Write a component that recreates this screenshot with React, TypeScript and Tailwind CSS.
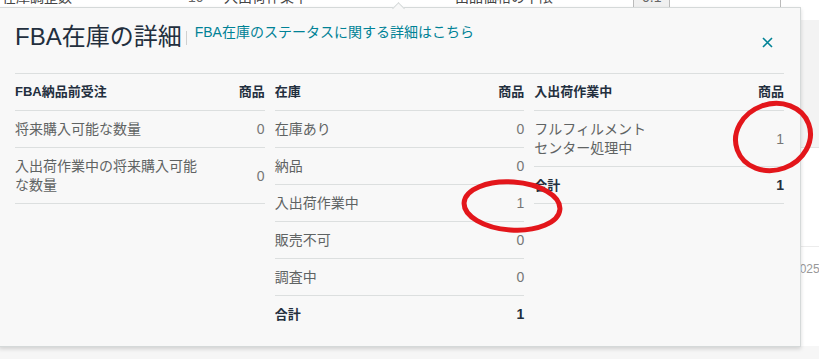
import React from 'react'

// FBA在庫の詳細 — ポップオーバー（背景の表の上に重なる）と赤丸の注記

type Row = { label: string[]; value: string; total?: boolean }
type Col = { title: string; rows: Row[]; noLastLine?: boolean }

const FONT = { fontFamily: '"Liberation Sans", "Noto Sans CJK JP", sans-serif' }

const columns: Col[] = [
  {
    title: 'FBA納品前受注',
    rows: [
      { label: ['将来購入可能な数量'], value: '0' },
      { label: ['入出荷作業中の将来購入可能', 'な数量'], value: '0' },
    ],
  },
  {
    title: '在庫',
    noLastLine: true,
    rows: [
      { label: ['在庫あり'], value: '0' },
      { label: ['納品'], value: '0' },
      { label: ['入出荷作業中'], value: '1' },
      { label: ['販売不可'], value: '0' },
      { label: ['調査中'], value: '0' },
      { label: ['合計'], value: '1', total: true },
    ],
  },
  {
    title: '入出荷作業中',
    rows: [
      { label: ['フルフィルメント', 'センター処理中'], value: '1' },
      { label: ['合計'], value: '1', total: true },
    ],
  },
]

function Column({ col }: { col: Col }) {
  return (
    <div className="flex flex-col">
      <div className="flex h-[37px] items-center justify-between border-b border-[#dcdfdf] text-[13px] font-bold text-[#232f3e]">
        <span>{col.title}</span>
        <span>商品</span>
      </div>
      {col.rows.map((r, i) => {
        const isLast = i === col.rows.length - 1
        const line = isLast && col.noLastLine ? 'border-b border-transparent' : 'border-b border-[#dcdfdf]'
        return (
          <div
            key={i}
            className={`flex items-center justify-between pt-[9px] pb-[8px] text-[14px] leading-[19px] ${line}`}
          >
            <span className={r.total ? 'text-[13px] font-bold text-[#232f3e]' : 'text-[#5f6363]'}>
              {r.label.map((l, j) => (
                <span key={j} className="block">
                  {l}
                </span>
              ))}
            </span>
            <span className={r.total ? 'text-[14px] font-bold text-[#232f3e]' : 'text-[#767676]'}>{r.value}</span>
          </div>
        )
      })}
    </div>
  )
}

function Background() {
  return (
    <div className="flex h-full flex-col">
      {/* 上端に見える表の一部（ほとんどポップオーバーの下に隠れる） */}
      <div className="-mt-[13px] flex h-[33px] items-start bg-white text-[14px] leading-[20px] text-[#444]">
        <span className="w-[188px] pl-[2px]">在庫調整数</span>
        <span className="w-[36px] text-[#666]">10</span>
        <span className="w-[231px]">入出荷作業中</span>
        <span className="w-[178px]">出品価格の下限</span>
        <span className="h-full w-[37px] border-x border-[#bbb] bg-[#f0f0f0] pl-[8px] text-[#666]">0.1</span>
        <span className="h-full w-[111px] border-r border-[#bbb]" />
      </div>
      <div className="h-[127px] bg-[#f3f3f3]" />
      <div className="h-[99px] border-t border-[#e3e3e3] bg-white" />
      <div className="flex h-[100px] border-t border-[#ececec] bg-white pl-[793px] pt-[13px] text-[12px] text-[#999]">
        2025
      </div>
      <div className="flex-1 bg-[#f6f6f6]" />
    </div>
  )
}

export default function App() {
  return (
    <div className="relative h-[359px] w-[819px] overflow-hidden bg-white" style={FONT}>
      <Background />

      {/* ポップオーバー */}
      <div className="absolute -left-px top-[7px] h-[340px] w-[802px] border border-[#d5d9d9] bg-[#f8f8f8] pl-[15px] pr-[16px] shadow-[0_2px_4px_rgba(0,0,0,0.15)]">
        <div className="absolute -top-[4px] left-[394px] h-[9px] w-[9px] rotate-45 border-l border-t border-[#d5d9d9] bg-[#f8f8f8]" />
        <div className="flex h-[66px] items-start justify-between border-b border-[#dcdfdf]">
          <div className="flex items-start pt-[13px]">
            <h1 className="text-[24px] leading-[32px] text-[#232f3e]">FBA在庫の詳細</h1>
            <span className="ml-[4px] mt-[10px] h-[14px] w-px bg-[#d0d0d0]" />
            <a className="ml-[8px] mt-[1px] text-[14px] leading-[20px] text-[#008296]">
              FBA在庫のステータスに関する詳細はこちら
            </a>
          </div>
          <button type="button" aria-label="閉じる" className="mr-[11px] mt-[29px] text-[#008296]">
            <svg width="11" height="11" viewBox="0 0 11 11" fill="none" stroke="currentColor" strokeWidth={1.6}>
              <path d="M1 1l9 9M10 1l-9 9" />
            </svg>
          </button>
        </div>
        <div className="grid grid-cols-3 gap-x-[10px]">
          {columns.map((c) => (
            <Column key={c.title} col={c} />
          ))}
        </div>
      </div>

      {/* 赤丸の注記 */}
      <svg className="pointer-events-none absolute inset-0" width="819" height="359" viewBox="0 0 819 359">
        <ellipse cx="512" cy="206" rx="48" ry="24" fill="none" stroke="#e3161b" strokeWidth="5" transform="rotate(4 512 206)" />
        <ellipse cx="773" cy="137" rx="38" ry="33" fill="none" stroke="#e3161b" strokeWidth="5" transform="rotate(-20 773 137)" />
      </svg>
    </div>
  )
}
